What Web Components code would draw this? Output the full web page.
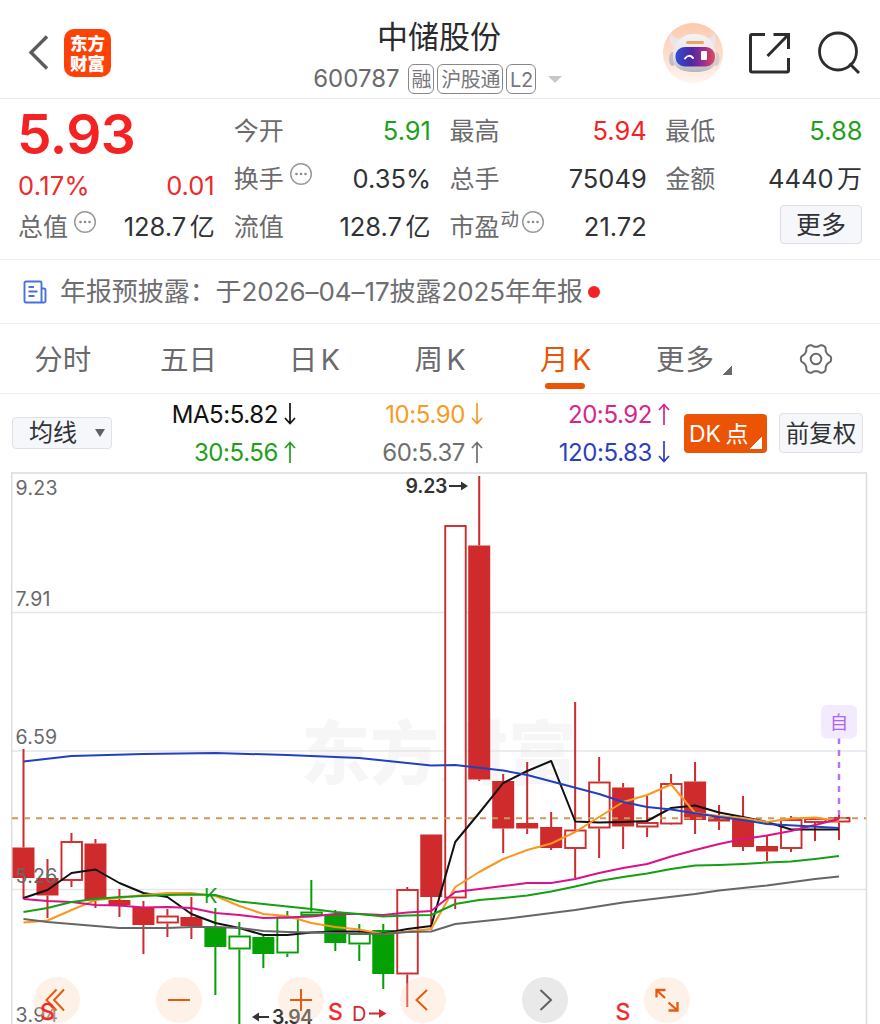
<!DOCTYPE html>
<html lang="zh-CN">
<head>
<meta charset="utf-8">
<title>中储股份 600787</title>
<style>
    html, body {
        margin: 0;
        padding: 0;
        background: #fff;
    }
    body {
        width: 880px;
        height: 1024px;
        overflow: hidden;
        font-family: Inter, "Noto Sans CJK SC", sans-serif;
        color: #303236;
        display: flex;
        flex-direction: column;
    }
</style>
</head>
<body>
<stock-header name="中储股份" code="600787">
    <stock-tag>融</stock-tag>
    <stock-tag>沪股通</stock-tag>
    <stock-tag>L2</stock-tag>
</stock-header>

<quote-panel>
    <quote-price>5.93</quote-price>
    <quote-cell label="今开" tone="down">5.91</quote-cell>
    <quote-cell label="最高" tone="up">5.94</quote-cell>
    <quote-cell label="最低" tone="down">5.88</quote-cell>
    <quote-change percent="0.17%" value="0.01"></quote-change>
    <quote-cell label="换手" info>0.35%</quote-cell>
    <quote-cell label="总手">75049</quote-cell>
    <quote-cell label="金额" unit="万">4440</quote-cell>
    <quote-cell label="总值" info unit="亿">128.7</quote-cell>
    <quote-cell label="流值" unit="亿">128.7</quote-cell>
    <quote-cell label="市盈" sup="动" info>21.72</quote-cell>
    <more-button>更多</more-button>
</quote-panel>

<notice-bar>年报预披露：于2026–04–17披露2025年年报</notice-bar>

<period-tabs>
    <period-tab>分时</period-tab>
    <period-tab>五日</period-tab>
    <period-tab>日 K</period-tab>
    <period-tab>周 K</period-tab>
    <period-tab active>月 K</period-tab>
    <period-tab more>更多</period-tab>
    <gear-icon></gear-icon>
</period-tabs>

<ma-bar>
    <ma-value color="#111" dir="down">MA5:5.82</ma-value>
    <ma-value color="#f79b27" dir="down">10:5.90</ma-value>
    <ma-value color="#d6268a" dir="up">20:5.92</ma-value>
    <ma-value color="#1ea01a" dir="up">30:5.56</ma-value>
    <ma-value color="#707070" dir="up">60:5.37</ma-value>
    <ma-value color="#2c3fc0" dir="down">120:5.83</ma-value>
</ma-bar>

<kline-chart>
    <round-button icon="rewind"></round-button>
    <round-button icon="minus"></round-button>
    <round-button icon="plus"></round-button>
    <round-button icon="prev"></round-button>
    <round-button icon="next" muted></round-button>
    <round-button icon="expand"></round-button>
</kline-chart>

<script>
class StockHeader extends HTMLElement {
    constructor() {
        super();
        this.attachShadow({ mode: 'open' });
    }

    connectedCallback() {
        const name = this.getAttribute('name') || '';
        const code = this.getAttribute('code') || '';

        this.shadowRoot.innerHTML = `
            <style>
                :host {
                    display: grid;
                    grid-template-columns: 1fr auto 1fr;
                    height: 98px;
                    flex: none;
                    border-bottom: 1px solid #e6e6e8;
                }
                .left {
                    display: flex;
                    align-items: center;
                    gap: 16px;
                    padding: 7px 0 0 28px;
                }
                .logo {
                    width: 47px;
                    height: 48px;
                    border-radius: 10px;
                    background: #fd4207;
                    color: #fff;
                    font: 900 17.5px/20px "Noto Sans CJK SC", sans-serif;
                    display: flex;
                    flex-direction: column;
                    align-items: center;
                    justify-content: center;
                }
                .center {
                    display: flex;
                    flex-direction: column;
                    align-items: center;
                    margin-left: -2px;
                }
                .name {
                    font-size: 31px;
                    line-height: 40px;
                    margin-top: 17px;
                    color: #2b2b2d;
                }
                .sub {
                    display: flex;
                    align-items: center;
                    height: 30px;
                    margin-top: 7px;
                    margin-left: -3px;
                    gap: 3px;
                }
                .code {
                    font-size: 24px;
                    line-height: 28px;
                    color: #6a6a6c;
                    margin-right: 5px;
                    letter-spacing: 0;
                }
                .caret {
                    border: 7px solid transparent;
                    border-top-color: #c6c6c8;
                    border-bottom: 0;
                    margin-left: 9px;
                }
                .right {
                    display: flex;
                    align-items: center;
                    justify-content: flex-end;
                    padding: 8px 19px 0 0;
                }
                svg { display: block; }
            </style>
            <div class="left">
                <svg width="20" height="35" viewBox="0 0 20 35"><path d="M19 1.500L3 17.500L19 33.500" fill="none" stroke="#5c5c5e" stroke-width="3.400"/></svg>
                <div class="logo"><span>东方</span><span>财富</span></div>
            </div>
            <div class="center">
                <div class="name">${name}</div>
                <div class="sub"><span class="code">${code}</span><slot></slot><i class="caret"></i></div>
            </div>
            <div class="right">
                <svg width="60" height="60" viewBox="0 0 60 60" style="margin-right:25px">
                    <defs>
                        <linearGradient id="bg" x1="0" y1="0" x2="0" y2="1"><stop offset="0" stop-color="#fcc9ae"/><stop offset="0.600" stop-color="#fde0d2"/><stop offset="1" stop-color="#fff5f0"/></linearGradient>
                        <linearGradient id="head" x1="0" y1="0" x2="0" y2="1"><stop offset="0" stop-color="#f6f3f3"/><stop offset="0.600" stop-color="#e6e3e6"/><stop offset="1" stop-color="#b4b4be"/></linearGradient>
                        <linearGradient id="visor"><stop offset="0" stop-color="#2d4fd2"/><stop offset="0.400" stop-color="#4f26a6"/><stop offset="0.750" stop-color="#a52f8e"/><stop offset="1" stop-color="#e0504f"/></linearGradient>
                    </defs>
                    <circle cx="30" cy="30" r="30" fill="url(#bg)"/>
                    <path d="M8 10Q4 21 13 25L21 15Q12 18 8 10ZM51 10Q56 20 48 25L40 15Q49 17 51 10Z" fill="#ebe5e5"/>
                    <ellipse cx="9.500" cy="36" rx="3.500" ry="7" fill="#c4bfc5"/>
                    <ellipse cx="53" cy="36" rx="3.500" ry="7" fill="#d6cccd"/>
                    <path d="M31 11C43 11 51 17 53 30C54 43 49 49 32 49C15 49 9 43 10 31C11 18 20 11 31 11Z" fill="url(#head)"/>
                    <rect x="23" y="18" width="18" height="3" rx="1.500" fill="#e9a565"/>
                    <rect x="12.500" y="24" width="39.500" height="19.500" rx="9" fill="url(#visor)"/>
                    <path d="M22 35.500Q26 30.500 30 35" fill="none" stroke="#fff" stroke-width="2" stroke-linecap="round"/>
                    <rect x="38" y="28" width="6" height="9" rx="1" fill="#fff"/>
                </svg>
                <svg width="42" height="42" viewBox="0 0 42 42" style="margin-right:27px"><path d="M17 2.500H4Q2.500 2.500 2.500 4V38.500Q2.500 40 4 40H39Q40.500 40 40.500 38.500V26M25.500 2.500H40.500V17M40 3L19.500 24" fill="none" stroke="#2d2d2f" stroke-width="3"/></svg>
                <svg width="44" height="44" viewBox="0 0 44 44"><circle cx="21" cy="20.500" r="18.500" fill="none" stroke="#2d2d2f" stroke-width="2.800"/><path d="M32.500 32.500L42 42" stroke="#2d2d2f" stroke-width="3"/></svg>
            </div>
        `;
    }
}

class StockTag extends HTMLElement {
    constructor() {
        super();
        this.attachShadow({ mode: 'open' }).innerHTML = `
            <style>
                :host {
                    display: block;
                    box-sizing: border-box;
                    height: 30px;
                    padding: 1px 2px 0 3px;
                    border: 1.5px solid #88888a;
                    border-radius: 6px;
                    font-size: 20px;
                    line-height: 28px;
                    letter-spacing: -0.4px;
                    color: #77777a;
                }
            </style>
            <slot></slot>
        `;
    }
}

class QuotePanel extends HTMLElement {
    constructor() {
        super();
        this.attachShadow({ mode: 'open' }).innerHTML = `
            <style>
                :host {
                    display: grid;
                    grid-template-columns: repeat(4, 1fr);
                    grid-template-rows: repeat(3, 48px);
                    column-gap: 19px;
                    padding: 8px 18px 8px 18px;
                    flex: none;
                    border-bottom: 1px solid #efeff1;
                }
            </style>
            <slot></slot>
        `;
    }
}

class QuotePrice extends HTMLElement {
    constructor() {
        super();
        this.attachShadow({ mode: 'open' }).innerHTML = `
            <style>
                :host {
                    display: block;
                    margin-left: -1px;
                    font-size: 55px;
                    font-weight: 600;
                    line-height: 54px;
                    color: #f52224;
                    letter-spacing: -0.5px;
                }
            </style>
            <slot></slot>
        `;
    }
}

class QuoteChange extends HTMLElement {
    constructor() {
        super();
        this.attachShadow({ mode: 'open' });
    }

    connectedCallback() {
        this.shadowRoot.innerHTML = `
            <style>
                :host {
                    display: flex;
                    justify-content: space-between;
                    align-items: center;
                    padding-top: 13px;
                    height: 34px;
                    font-size: 25.5px;
                    color: #ee2a2c;
                }
                .percent { letter-spacing: 0.3px; }
            </style>
            <span class="percent">${this.getAttribute('percent')}</span>
            <span>${this.getAttribute('value')}</span>
        `;
    }
}

class QuoteCell extends HTMLElement {
    constructor() {
        super();
        this.attachShadow({ mode: 'open' });
    }

    connectedCallback() {
        const label = this.getAttribute('label') || '';
        const sup = this.getAttribute('sup') || '';
        const unit = this.getAttribute('unit') || '';
        const info = this.hasAttribute('info')
            ? '<svg width="24" height="24" viewBox="0 0 24 24"><circle cx="12" cy="12" r="10.300" fill="none" stroke="#9a9a9c" stroke-width="1.500"/><g fill="#8a8a8c"><circle cx="7.500" cy="12" r="1.300"/><circle cx="12" cy="12" r="1.300"/><circle cx="16.500" cy="12" r="1.300"/></g></svg>'
            : '';

        this.shadowRoot.innerHTML = `
            <style>
                :host {
                    display: flex;
                    align-items: center;
                    font-size: 25px;
                    line-height: 48px;
                    white-space: nowrap;
                }
                .label {
                    color: #6b6b6d;
                    flex: 1;
                    display: flex;
                }
                .sup {
                    font-size: 18.5px;
                    line-height: 33px;
                    margin-left: 1px;
                }
                svg { margin: 7px 0 0 ${sup ? 2 : 5}px; }
                .value {
                    font-size: 25.5px;
                    margin-right: -0.5px;
                }
                .unit { margin-left: 4px; }
                :host([tone="up"]) .value { color: #f52224; }
                :host([tone="down"]) .value { color: #1ea01a; }
            </style>
            <span class="label">${label}${sup ? `<span class="sup">${sup}</span>` : ''}${info}</span>
            <span class="value"><slot></slot></span>
            ${unit ? `<span class="unit">${unit}</span>` : ''}
        `;
    }
}

class MoreButton extends HTMLElement {
    constructor() {
        super();
        this.attachShadow({ mode: 'open' }).innerHTML = `
            <style>
                :host {
                    display: block;
                    box-sizing: border-box;
                    justify-self: end;
                    width: 82px;
                    height: 39px;
                    margin-top: 2px;
                    border: 1px solid #dcdee3;
                    border-radius: 4px;
                    background: #f6f7fa;
                    font-size: 25px;
                    line-height: 39px;
                    text-align: center;
                }
            </style>
            <slot></slot>
        `;
    }
}

class NoticeBar extends HTMLElement {
    constructor() {
        super();
        this.attachShadow({ mode: 'open' }).innerHTML = `
            <style>
                :host {
                    display: flex;
                    align-items: center;
                    height: 63px;
                    flex: none;
                    padding-left: 23px;
                    border-bottom: 1px solid #efeff1;
                    font-size: 26px;
                    color: #6e6e70;
                    white-space: nowrap;
                }
                svg { margin-right: 13px; }
                .text {
                    letter-spacing: -0.07px;
                    margin-top: -4px;
                }
                .dot {
                    width: 12px;
                    height: 12px;
                    border-radius: 50%;
                    background: #f52224;
                    margin-left: 5px;
                }
            </style>
            <svg width="24" height="24" viewBox="0 0 24 24"><path d="M18.500 22.500H3Q1.500 22.500 1.500 21V3Q1.500 1.500 3 1.500H17Q18.500 1.500 18.500 3V22.500H21Q22.500 22.500 22.500 21V10Q22.500 8.500 21 8.500H18.500M5.500 7H11M5.500 11.500H14.500M5.500 16H11.500" fill="none" stroke="#4a6fe3" stroke-width="1.900"/></svg>
            <span class="text"><slot></slot></span>
            <i class="dot"></i>
        `;
    }
}

class PeriodTabs extends HTMLElement {
    constructor() {
        super();
        this.attachShadow({ mode: 'open' }).innerHTML = `
            <style>
                :host {
                    display: grid;
                    grid-template-columns: repeat(7, minmax(0, 1fr));
                    height: 69px;
                    flex: none;
                    border-bottom: 1px solid #efeff1;
                }
            </style>
            <slot></slot>
        `;
    }
}

class PeriodTab extends HTMLElement {
    constructor() {
        super();
        this.attachShadow({ mode: 'open' }).innerHTML = `
            <style>
                :host {
                    display: flex;
                    box-sizing: border-box;
                    justify-content: center;
                    position: relative;
                    font-size: 28.5px;
                    line-height: 71px;
                    color: #6a6a6c;
                    word-spacing: -4.5px;
                }
                :host([active]) { color: #eb5405; }
                :host([active])::after {
                    content: "";
                    position: absolute;
                    bottom: 6px;
                    left: 42px;
                    width: 40px;
                    height: 6px;
                    border-radius: 3px;
                    background: #eb5405;
                }
                :host([more]) {
                    letter-spacing: 1px;
                    padding-left: 5px;
                }
                :host([more])::after {
                    content: "";
                    align-self: flex-end;
                    width: 9px;
                    height: 9px;
                    margin: 0 0 20px 8px;
                    background: linear-gradient(135deg, transparent 50%, #6a6a6c 50%);
                }
            </style>
            <span><slot></slot></span>
        `;
    }
}

class GearIcon extends HTMLElement {
    constructor() {
        super();
        this.attachShadow({ mode: 'open' });
    }

    connectedCallback() {
        // six rounded teeth, one of them on the x axis
        const points = [];
        for (let a = 0; a < 360; a += 4) {
            const t = a * Math.PI / 180;
            const r = 13.7 + 1.6 * Math.tanh(1.5 * Math.cos(6 * t));
            points.push(`${(17 + r * Math.cos(t)).toFixed(2)} ${(17 + r * Math.sin(t)).toFixed(2)}`);
        }

        this.shadowRoot.innerHTML = `
            <style>
                :host {
                    display: flex;
                    box-sizing: border-box;
                    align-items: center;
                    justify-content: center;
                    padding: 0 2px 1px 0;
                }
            </style>
            <svg width="34" height="34" viewBox="0 0 34 34" fill="none" stroke="#6a6a6c" stroke-width="2"><path d="M${points.join('L')}Z" stroke-linejoin="round"/><circle cx="17" cy="17" r="5.300"/></svg>
        `;
    }
}

class MaBar extends HTMLElement {
    constructor() {
        super();
        this.attachShadow({ mode: 'open' }).innerHTML = `
            <style>
                :host {
                    display: flex;
                    align-items: center;
                    height: 78px;
                    flex: none;
                    padding: 0 17px 0 12px;
                    font-size: 24px;
                }
                .btn {
                    box-sizing: border-box;
                    border: 1px solid #dfe1e5;
                    border-radius: 4px;
                    background: #f6f7fa;
                    white-space: nowrap;
                }
                .select {
                    width: 100px;
                    height: 32px;
                    display: flex;
                    align-items: center;
                    justify-content: space-between;
                    line-height: 28px;
                    padding: 0 6px 0 16px;
                }
                .select i {
                    border: 5px solid transparent;
                    border-top: 8px solid #606062;
                    border-bottom: 0;
                }
                .values {
                    display: grid;
                    grid-template-columns: repeat(3, 187px);
                    grid-template-rows: 38px 38px;
                    margin-left: -3px;
                }
                .dk {
                    margin-left: 14px;
                    width: 83px;
                    height: 39px;
                    border: 0;
                    border-radius: 4px;
                    background: linear-gradient(135deg, transparent 50%, #fff 50%) right 5px bottom 4px / 12px 12px no-repeat, #eb5405;
                    color: #fff;
                    line-height: 40px;
                    padding-left: 5px;
                    font-size: 23px;
                    word-spacing: -2px;
                }
                .fq {
                    margin-left: auto;
                    width: 84px;
                    height: 40px;
                    font-size: 23.500px;
                    line-height: 40px;
                    text-align: center;
                }
            </style>
            <div class="btn select">均线<i></i></div>
            <div class="values"><slot></slot></div>
            <div class="btn dk">DK 点</div>
            <div class="btn fq">前复权</div>
        `;
    }
}

class MaValue extends HTMLElement {
    constructor() {
        super();
        this.attachShadow({ mode: 'open' });
    }

    connectedCallback() {
        const color = this.getAttribute('color');
        const arrow = this.getAttribute('dir') === 'up'
            ? 'M6 22V1.500M1 7L6 1.500L11 7'
            : 'M6 0V20.500M1 15L6 20.500L11 15';

        this.shadowRoot.innerHTML = `
            <style>
                :host {
                    display: flex;
                    align-items: center;
                    justify-content: flex-end;
                    gap: 6px;
                    color: ${color};
                    letter-spacing: -0.4px;
                }
            </style>
            <span><slot></slot></span>
            <svg width="12" height="22" viewBox="0 0 12 22"><path d="${arrow}" fill="none" stroke="currentColor" stroke-width="1.700"/></svg>
        `;
    }
}

// [high, body top, body bottom, low, kind]; R/G filled, r/g hollow
const CANDLES = [
    [749, 847.5, 878, 899, 'R'], [859, 878, 895.5, 918, 'R'], [833, 841, 881, 887, 'r'],
    [839, 843.5, 900, 908, 'R'], [889, 900, 905, 917, 'R'], [901, 907, 925, 954, 'R'],
    [909, 915.5, 923.5, 937, 'r'], [897, 917, 926, 939, 'R'], [908, 927, 947, 995, 'G'],
    [922, 935.5, 949.5, 1024, 'g'], [936, 937, 954, 968, 'G'], [911, 916.5, 953.5, 957, 'g'],
    [880, 911.5, 916, 916, 'g'], [910, 915, 943, 951, 'G'], [924, 933, 944.5, 961, 'g'],
    [924, 930, 974, 989, 'G'], [887, 889, 974.5, 1007, 'r'], [834.5, 834.5, 897, 930, 'R'],
    [525, 525, 898.5, 909, 'r'], [476, 545.5, 779.5, 781, 'R'], [774, 781, 828.5, 853, 'R'],
    [762, 823, 828.5, 834, 'R'], [812, 827, 848, 850, 'R'], [702, 829.5, 849, 878, 'r'],
    [757, 781.5, 828.5, 858, 'r'], [783, 787.5, 826.5, 849, 'R'], [796, 822, 827.5, 837, 'r'],
    [774, 783, 824.5, 825, 'r'], [762, 781.5, 820, 834, 'R'], [805, 817, 821.5, 830, 'R'],
    [796, 818, 847, 851, 'R'], [836, 846, 851.5, 861, 'R'], [816, 819, 849, 852, 'r'],
    [818, 818, 823, 841, 'r'], [815, 817, 822.5, 840, 'r']
];

const STEP = 23.985;
const x = i => 23.5 + i * STEP;

// y of each average per candle, null where the line runs straight on
const LINES = [
    ['#111', [898, 890, 873, 869.5, 883, 893, 897, 914, 923, 928, 935, 935, 932.5, 931.5, 931.5, 933.5, 929, 926, 842, 813, 783, 771, 761, 821.5, 822.5, 822, 821, 808, 805.5, 812.5, 817, 822, 829.5, 829.5, 829.5]],
    ['#f9971f', [922.5, 920.5, 910, 900, 898, 895, 893, 893, 896, 906, 914, 916, 923, 927, 929.5, 934, 931.5, 929, 887, 872, 859, 850, 843.5, 832, 817, 802, 795, 784.5, 813, 816, 818, 822, 818.5, 817.5, 821]],
    ['#d9128a', [899, 901, 902, 905, 905.5, 907.5, 907, 908, 913, 915, 918, 917.5, 916.5, 914, 914, 915, 912.5, 911, 892, 889, 886, 883, 883, 879, 873, 868, 864, 856.5, 850, 844, 839, 835.5, 831, 825, 819]],
    ['#14a014', [912, 908, 902, 899, 897, 896, 895, 894.5, 895, 901.5, 904, 906.5, 909, 912, 914, 916.5, 915.5, 915, 904, 900, 898, 895.5, 891.5, 886.5, 881, 877, 873.5, 869, 865.5, 865, 864, 862.5, 861.5, 859, 856]],
    ['#666', [919, 922, null, 926, 928, null, 928, 927, 927, 928, 931, 932, null, 933, null, 934, 932, 931.5, 924, null, 919, null, null, 910, null, 902.5, null, null, 894, 890.5, null, 885.5, null, 879, 876.5]],
    ['#2340c0', [761.5, null, 756, null, null, 754, null, null, 753, null, null, 755, null, null, 758, null, null, 765.5, 765, null, 770.5, 775, null, null, 794, 802, 807, 809.5, null, 817, 820, 824, null, null, 828]]
];

function drawCandle([high, top, bottom, low, kind], i) {
    const cx = x(i);
    const color = kind.toLowerCase() === 'r' ? '#cf2b2d' : '#04a004';
    const hollow = kind === 'r' || kind === 'g';
    const body = hollow
        ? `<rect x="${cx - 10}" y="${top + 1}" width="20.500" height="${Math.max(bottom - top - 2, 2)}" fill="#fff" stroke="${color}" stroke-width="1.900"/>`
        : `<rect x="${cx - 11}" y="${top}" width="22" height="${bottom - top}" fill="${color}"/>`;
    return `<path d="M${cx} ${high}V${top}M${cx} ${bottom}V${low}" stroke="${color}" stroke-width="2"/>${body}`;
}

function drawLine([color, ys]) {
    const pts = ys.map((y, i) => y === null ? '' : `${x(i).toFixed(1)},${y}`).filter(Boolean);
    return `<polyline points="${pts.join(' ')}" fill="none" stroke="${color}" stroke-width="2" stroke-linejoin="round"/>`;
}

class KlineChart extends HTMLElement {
    constructor() {
        super();
        this.attachShadow({ mode: 'open' });
    }

    connectedCallback() {
        this.shadowRoot.innerHTML = `
            <style>
                :host {
                    display: block;
                    position: relative;
                    flex: 1;
                    min-height: 0;
                    overflow: hidden;
                }
                svg { display: block; }
                text { font-family: Inter, "Noto Sans CJK SC", sans-serif; }
                .axis text { font-size: 19.5px; fill: #68686a; letter-spacing: 0.3px; }
                .mark { font-size: 19.5px; font-weight: 600; fill: #333; }
                .signals {
                    position: absolute;
                    left: 0;
                    top: 0;
                    pointer-events: none;
                }
                .tools {
                    position: absolute;
                    left: 33.5px;
                    bottom: 1px;
                    display: flex;
                    gap: 76px;
                }
            </style>
            <svg width="880" height="552" viewBox="0 472 880 552">
                <text x="301" y="779" font-size="69" font-weight="900" fill="#f6f6f7" style="font-family:'Noto Sans CJK SC'">东方财富</text>
                <path d="M12 612.500H867M12 751H867M12 889.500H867" stroke="#e4e6ea" stroke-width="1.500"/>
                <path d="M11.700 1024V473H866.500V1024" fill="none" stroke="#d9dbdf" stroke-width="1.400"/>
                ${CANDLES.map(drawCandle).join('')}
                <path d="M12 818.300H866" stroke="#cb9a5a" stroke-width="2" stroke-dasharray="6 6"/>
                ${LINES.map(drawLine).join('')}
                <g class="axis">
                    <text x="15.500" y="495">9.23</text>
                    <text x="15.500" y="606">7.91</text>
                    <text x="15.500" y="744">6.59</text>
                    <text x="15.500" y="883">5.26</text>
                    <text x="15.500" y="1022">3.94</text>
                </g>
                <text class="mark" x="405.500" y="492.500" textLength="42">9.23</text>
                <path d="M449 486H463" stroke="#333" stroke-width="2"/><path d="M461 481.500L468 486L461 490.500Z" fill="#333"/>
                <text class="mark" x="272" y="1023.500" textLength="41">3.94</text>
                <path d="M269 1017H256" stroke="#333" stroke-width="2"/><path d="M259 1012.500L252 1017L259 1021.500Z" fill="#333"/>
                <text x="204" y="903" font-size="20" fill="#14a014">K</text>
                <path d="M839 738V815" stroke="#b673f2" stroke-width="2.500" stroke-dasharray="6 6"/>
                <rect x="821" y="705" width="36" height="33.500" rx="6" fill="#f3eafe"/>
                <text x="839" y="729" font-size="18.500" fill="#b066f2" text-anchor="middle">自</text>
            </svg>
            <div class="tools"><slot></slot></div>
            <svg class="signals" width="880" height="552" viewBox="0 472 880 552">
                <g font-size="23" fill="#f02828" stroke="#f02828" stroke-width="0.400">
                    <text x="40" y="1020">S</text>
                    <text x="328" y="1020">S</text>
                    <text x="615.500" y="1020">S</text>
                </g>
                <text x="352" y="1021" font-size="20" fill="#cf2b2d">D</text>
                <path d="M369 1013.500H382" stroke="#cf2b2d" stroke-width="2"/><path d="M379 1009L386.500 1013.500L379 1018Z" fill="#cf2b2d"/>
            </svg>
        `;
    }
}

const TOOL_ICONS = {
    rewind: '<path d="M22.500 12.500L12.500 23L22.500 33.500M30 12.500L20 23L30 33.500"/>',
    minus: '<path d="M12 23H34"/>',
    plus: '<path d="M12 23H34M23 12V34"/>',
    prev: '<path d="M27 13L16.500 23L27 33"/>',
    next: '<path d="M18.500 13L29 23L18.500 33"/>',
    expand: '<path d="M12.500 20.500V13H21.500M13 13.500L21 21M33.500 25V33.500H24.500M33 33L24.500 25.500" stroke-width="2.300"/>'
};

class RoundButton extends HTMLElement {
    constructor() {
        super();
        this.attachShadow({ mode: 'open' });
    }

    connectedCallback() {
        this.shadowRoot.innerHTML = `
            <style>
                :host {
                    display: block;
                    width: 46px;
                    height: 46px;
                    border-radius: 50%;
                    background: rgba(251, 214, 190, 0.35);
                    color: #e85a12;
                }
                :host([muted]) {
                    background: rgba(200, 200, 200, 0.4);
                    color: #606062;
                }
                svg { display: block; }
            </style>
            <svg width="46" height="46" viewBox="0 0 46 46" fill="none" stroke="currentColor" stroke-width="2">${TOOL_ICONS[this.getAttribute('icon')] || ''}</svg>
        `;
    }
}

customElements.define('stock-header', StockHeader);
customElements.define('stock-tag', StockTag);
customElements.define('quote-panel', QuotePanel);
customElements.define('quote-price', QuotePrice);
customElements.define('quote-change', QuoteChange);
customElements.define('quote-cell', QuoteCell);
customElements.define('more-button', MoreButton);
customElements.define('notice-bar', NoticeBar);
customElements.define('period-tabs', PeriodTabs);
customElements.define('period-tab', PeriodTab);
customElements.define('gear-icon', GearIcon);
customElements.define('ma-bar', MaBar);
customElements.define('ma-value', MaValue);
customElements.define('kline-chart', KlineChart);
customElements.define('round-button', RoundButton);
</script>
</body>
</html>
